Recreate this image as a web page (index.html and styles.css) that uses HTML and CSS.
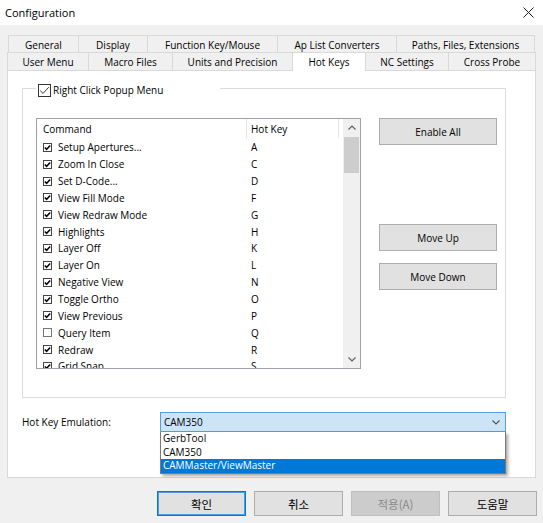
FILE: index.html
```html
<!DOCTYPE html>
<html>
<head>
<meta charset="utf-8">
<title>Configuration</title>
<link rel="stylesheet" href="styles.css">
</head>
<body>
<div class="window">
  <div class="titlebar">
    <span class="title">Configuration</span>
    <svg class="close" width="11" height="11" viewBox="0 0 11 11"><path d="M0.5 0.5 L10.5 10.5 M10.5 0.5 L0.5 10.5" stroke="#1a1a1a" stroke-width="1" fill="none"/></svg>
  </div>
  <div class="content">
    <div class="tabs">
      <div class="tabrow row1">
        <div class="tab t-general">General</div>
        <div class="tab t-display">Display</div>
        <div class="tab t-fkm">Function Key/Mouse</div>
        <div class="tab t-aplist">Ap List Converters</div>
        <div class="tab t-paths">Paths, Files, Extensions</div>
      </div>
      <div class="tabrow row2">
        <div class="tab t-user">User Menu</div>
        <div class="tab t-macro">Macro Files</div>
        <div class="tab t-units">Units and Precision</div>
        <div class="tab t-hot selected">Hot Keys</div>
        <div class="tab t-nc">NC Settings</div>
        <div class="tab t-cross">Cross Probe</div>
      </div>
    </div>
    <div class="panel">
      <div class="group">
        <div class="legend">
          <svg class="bigcb" width="13" height="13" viewBox="0 0 13 13"><rect x="0.5" y="0.5" width="12" height="12" fill="#fff" stroke="#333"/><path d="M2.2 6.6 L5 9.4 L10.8 3.2" fill="none" stroke="#333" stroke-width="1"/></svg>
          <span>Right Click Popup Menu</span>
        </div>
        <div class="group-body">
          <div class="listview">
            <div class="lv-main">
              <div class="lv-header">
                <div class="h-cmd">Command</div>
                <div class="h-key">Hot Key</div>
              </div>
              <div class="lv-rows">
                <div class="lv-row"><span class="c-cmd"><svg class="cb" width="9" height="9" viewBox="0 0 9 9"><rect x="0.5" y="0.5" width="8" height="8" fill="#fff" stroke="#444"/><path d="M1.8 4.4 L3.6 6.3 L7.2 2.4" fill="none" stroke="#000" stroke-width="1.5"/></svg>Setup Apertures...</span><span class="c-key">A</span></div>
                <div class="lv-row"><span class="c-cmd"><svg class="cb" width="9" height="9" viewBox="0 0 9 9"><rect x="0.5" y="0.5" width="8" height="8" fill="#fff" stroke="#444"/><path d="M1.8 4.4 L3.6 6.3 L7.2 2.4" fill="none" stroke="#000" stroke-width="1.5"/></svg>Zoom In Close</span><span class="c-key">C</span></div>
                <div class="lv-row"><span class="c-cmd"><svg class="cb" width="9" height="9" viewBox="0 0 9 9"><rect x="0.5" y="0.5" width="8" height="8" fill="#fff" stroke="#444"/><path d="M1.8 4.4 L3.6 6.3 L7.2 2.4" fill="none" stroke="#000" stroke-width="1.5"/></svg>Set D-Code...</span><span class="c-key">D</span></div>
                <div class="lv-row"><span class="c-cmd"><svg class="cb" width="9" height="9" viewBox="0 0 9 9"><rect x="0.5" y="0.5" width="8" height="8" fill="#fff" stroke="#444"/><path d="M1.8 4.4 L3.6 6.3 L7.2 2.4" fill="none" stroke="#000" stroke-width="1.5"/></svg>View Fill Mode</span><span class="c-key">F</span></div>
                <div class="lv-row"><span class="c-cmd"><svg class="cb" width="9" height="9" viewBox="0 0 9 9"><rect x="0.5" y="0.5" width="8" height="8" fill="#fff" stroke="#444"/><path d="M1.8 4.4 L3.6 6.3 L7.2 2.4" fill="none" stroke="#000" stroke-width="1.5"/></svg>View Redraw Mode</span><span class="c-key">G</span></div>
                <div class="lv-row"><span class="c-cmd"><svg class="cb" width="9" height="9" viewBox="0 0 9 9"><rect x="0.5" y="0.5" width="8" height="8" fill="#fff" stroke="#444"/><path d="M1.8 4.4 L3.6 6.3 L7.2 2.4" fill="none" stroke="#000" stroke-width="1.5"/></svg>Highlights</span><span class="c-key">H</span></div>
                <div class="lv-row"><span class="c-cmd"><svg class="cb" width="9" height="9" viewBox="0 0 9 9"><rect x="0.5" y="0.5" width="8" height="8" fill="#fff" stroke="#444"/><path d="M1.8 4.4 L3.6 6.3 L7.2 2.4" fill="none" stroke="#000" stroke-width="1.5"/></svg>Layer Off</span><span class="c-key">K</span></div>
                <div class="lv-row"><span class="c-cmd"><svg class="cb" width="9" height="9" viewBox="0 0 9 9"><rect x="0.5" y="0.5" width="8" height="8" fill="#fff" stroke="#444"/><path d="M1.8 4.4 L3.6 6.3 L7.2 2.4" fill="none" stroke="#000" stroke-width="1.5"/></svg>Layer On</span><span class="c-key">L</span></div>
                <div class="lv-row"><span class="c-cmd"><svg class="cb" width="9" height="9" viewBox="0 0 9 9"><rect x="0.5" y="0.5" width="8" height="8" fill="#fff" stroke="#444"/><path d="M1.8 4.4 L3.6 6.3 L7.2 2.4" fill="none" stroke="#000" stroke-width="1.5"/></svg>Negative View</span><span class="c-key">N</span></div>
                <div class="lv-row"><span class="c-cmd"><svg class="cb" width="9" height="9" viewBox="0 0 9 9"><rect x="0.5" y="0.5" width="8" height="8" fill="#fff" stroke="#444"/><path d="M1.8 4.4 L3.6 6.3 L7.2 2.4" fill="none" stroke="#000" stroke-width="1.5"/></svg>Toggle Ortho</span><span class="c-key">O</span></div>
                <div class="lv-row"><span class="c-cmd"><svg class="cb" width="9" height="9" viewBox="0 0 9 9"><rect x="0.5" y="0.5" width="8" height="8" fill="#fff" stroke="#444"/><path d="M1.8 4.4 L3.6 6.3 L7.2 2.4" fill="none" stroke="#000" stroke-width="1.5"/></svg>View Previous</span><span class="c-key">P</span></div>
                <div class="lv-row"><span class="c-cmd"><svg class="cb" width="9" height="9" viewBox="0 0 9 9"><rect x="0.5" y="0.5" width="8" height="8" fill="#fff" stroke="#777"/></svg>Query Item</span><span class="c-key">Q</span></div>
                <div class="lv-row"><span class="c-cmd"><svg class="cb" width="9" height="9" viewBox="0 0 9 9"><rect x="0.5" y="0.5" width="8" height="8" fill="#fff" stroke="#444"/><path d="M1.8 4.4 L3.6 6.3 L7.2 2.4" fill="none" stroke="#000" stroke-width="1.5"/></svg>Redraw</span><span class="c-key">R</span></div>
                <div class="lv-row"><span class="c-cmd"><svg class="cb" width="9" height="9" viewBox="0 0 9 9"><rect x="0.5" y="0.5" width="8" height="8" fill="#fff" stroke="#444"/><path d="M1.8 4.4 L3.6 6.3 L7.2 2.4" fill="none" stroke="#000" stroke-width="1.5"/></svg>Grid Snap</span><span class="c-key">S</span></div>
              </div>
            </div>
            <div class="scrollbar">
              <div class="sb-btn"><svg width="8" height="5" viewBox="0 0 8 5"><path d="M0.5 4.5 L4 1 L7.5 4.5" fill="none" stroke="#606060" stroke-width="1.2"/></svg></div>
              <div class="sb-track"><div class="sb-thumb"></div></div>
              <div class="sb-btn"><svg width="8" height="5" viewBox="0 0 8 5"><path d="M0.5 0.5 L4 4 L7.5 0.5" fill="none" stroke="#606060" stroke-width="1.2"/></svg></div>
            </div>
          </div>
          <div class="side-buttons">
            <div class="btn side enable">Enable All</div>
            <div class="btn side moveup">Move Up</div>
            <div class="btn side movedown">Move Down</div>
          </div>
        </div>
      </div>
      <div class="emu-row">
        <div class="emu-label">Hot Key Emulation:</div>
        <div class="combo-wrap">
          <div class="combo">
            <span>CAM350</span>
            <svg width="8" height="5" viewBox="0 0 8 5"><path d="M0.5 0.5 L4 4 L7.5 0.5" fill="none" stroke="#555" stroke-width="1.1"/></svg>
          </div>
          <div class="dropdown">
            <div class="dd-item">GerbTool</div>
            <div class="dd-item">CAM350</div>
            <div class="dd-item sel">CAMMaster/ViewMaster</div>
          </div>
        </div>
      </div>
    </div>
    <div class="buttons">
      <div class="btn kbtn default">확인</div>
      <div class="btn kbtn">취소</div>
      <div class="btn kbtn disabled">적용(A)</div>
      <div class="btn kbtn">도움말</div>
    </div>
  </div>
</div>
</body>
</html>
```
FILE: styles.css
```css
html, body {
  margin: 0;
  padding: 0;
}
body {
  background: #f0f0f0;
  font-family: "Open Sans", "Noto Sans", "Noto Sans CJK KR", sans-serif;
  font-size: 10px;
  color: #000;
}
.window {
  width: 543px;
  height: 523px;
  overflow: hidden;
}
.titlebar {
  height: 25px;
  background: #fff;
  display: flex;
  align-items: center;
  justify-content: space-between;
  padding: 0 9px 0 5px;
  box-sizing: border-box;
}
.title {
  font-size: 11px;
  color: #000;
}
.close {
  display: block;
}
.content {
  padding: 10px 0 0 7px;
}
.tabrow {
  display: flex;
  align-items: flex-end;
}
.row1 {
  height: 17px;
  margin-left: 1px;
}
.row2 {
  height: 18px;
}
.tab {
  box-sizing: border-box;
  height: 100%;
  border: 1px solid #d9d9d9;
  border-bottom: none;
  margin-right: -1px;
  display: flex;
  align-items: center;
  justify-content: center;
  background: #f0f0f0;
  white-space: nowrap;
}
.row1 .tab {
  padding-top: 1px;
}
.t-general { width: 71px; }
.t-display { width: 70px; }
.t-fkm { width: 131px; }
.t-aplist { width: 120px; }
.t-paths { width: 139px; }
.t-user { width: 82px; }
.t-macro { width: 85px; }
.t-units { width: 121px; }
.t-hot { width: 74px; }
.t-nc { width: 84px; }
.t-cross { width: 88px; }
.tab.selected {
  background: #fff;
  height: 19px;
  margin-bottom: -1px;
  padding-bottom: 1px;
  z-index: 2;
}
.panel {
  width: 529px;
  height: 408px;
  box-sizing: border-box;
  border: 1px solid #d9d9d9;
  background: #fff;
  overflow: visible;
}
.group {
  box-sizing: border-box;
  width: 484px;
  height: 310px;
  margin: 17px 0 0 14px;
  border: 1px solid #dcdcdc;
  padding-left: 13px;
}
.legend {
  display: flex;
  align-items: center;
  gap: 2px;
  width: 184px;
  height: 16px;
  margin-top: -7px;
  background: #fff;
}
.bigcb {
  display: block;
  margin-left: 2px;
}
.group-body {
  display: flex;
  align-items: flex-start;
  margin-top: 20px;
}
.listview {
  box-sizing: border-box;
  width: 325px;
  height: 251px;
  border: 1px solid #9da1a8;
  display: flex;
  background: #fff;
}
.lv-main {
  width: 306px;
  height: 249px;
  overflow: hidden;
}
.lv-header {
  display: flex;
  height: 19px;
}
.h-cmd, .h-key {
  box-sizing: border-box;
  height: 19px;
  display: flex;
  align-items: center;
  border-right: 1px solid #e5e5e5;
}
.h-cmd {
  width: 210px;
  padding-left: 6px;
}
.h-key {
  width: 92px;
  padding-left: 4px;
}
.lv-rows {
  padding-top: 1px;
}
.lv-row {
  display: flex;
  height: 16.85px;
  align-items: center;
}
.c-cmd {
  width: 210px;
  box-sizing: border-box;
  padding-left: 6px;
  display: flex;
  align-items: center;
  gap: 6px;
  white-space: nowrap;
}
.c-key {
  padding-left: 4px;
}
.cb {
  display: block;
  flex: none;
}
.scrollbar {
  width: 17px;
  height: 249px;
  background: #f0f0f0;
  display: flex;
  flex-direction: column;
}
.sb-btn {
  height: 17px;
  display: flex;
  align-items: center;
  justify-content: center;
  flex: none;
}
.sb-track {
  flex: 1;
  padding: 1px 1px 0 1px;
}
.sb-thumb {
  height: 36px;
  background: #cdcdcd;
}
.side-buttons {
  display: flex;
  flex-direction: column;
  margin-left: 18px;
}
.btn {
  box-sizing: border-box;
  display: flex;
  align-items: center;
  justify-content: center;
  background: #e1e1e1;
  border: 1px solid #adadad;
  color: #000;
}
.side {
  width: 118px;
  height: 27px;
}
.moveup {
  margin-top: 79px;
}
.movedown {
  margin-top: 12px;
}
.emu-row {
  display: flex;
  align-items: center;
  margin: 14px 0 0 14px;
}
.emu-label {
  width: 138px;
}
.combo-wrap {
  position: relative;
}
.combo {
  box-sizing: border-box;
  width: 346px;
  height: 20px;
  background: #cce4f7;
  border: 1px solid #569de5;
  display: flex;
  align-items: center;
  justify-content: space-between;
  padding: 0 5px 0 3px;
}
.combo svg {
  display: block;
}
.dropdown {
  position: absolute;
  top: 20px;
  left: 0;
  width: 346px;
  box-sizing: border-box;
  border: 1px solid #7a7a7a;
  border-top: none;
  background: #fff;
  box-shadow: 2px 2px 3px rgba(0, 0, 0, 0.35);
  z-index: 5;
}
.dd-item {
  height: 13.6px;
  line-height: 13.6px;
  padding-left: 2px;
  white-space: nowrap;
}
.dd-item.sel {
  background: #0078d7;
  color: #fff;
}
.buttons {
  display: flex;
  justify-content: flex-end;
  gap: 8px;
  padding-right: 6px;
  margin-top: 13px;
}
.kbtn {
  width: 89px;
  height: 25px;
  font-family: "Noto Sans CJK KR", sans-serif;
  font-size: 11.5px;
}
.kbtn.default {
  border-color: #0078d7;
  box-shadow: inset 0 0 0 1px #4a9de0;
}
.kbtn.disabled {
  background: #cccccc;
  border-color: #bfbfbf;
  color: #8a8a8a;
}
```
